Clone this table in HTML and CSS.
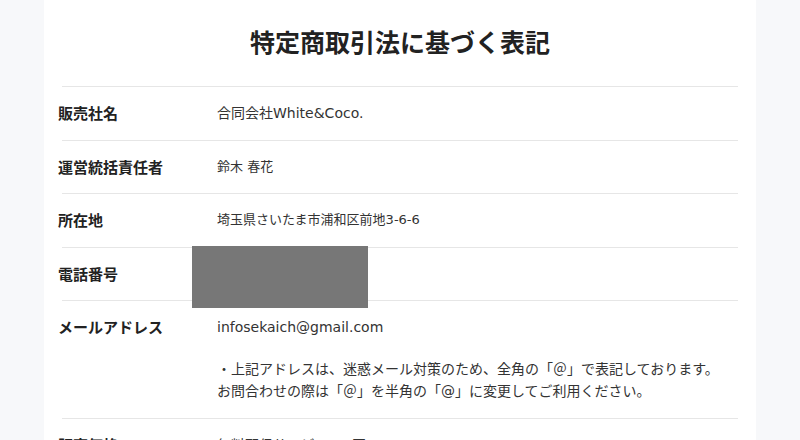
FILE: index.html
```html
<!DOCTYPE html>
<html lang="ja">
<head>
<meta charset="utf-8">
<title>特定商取引法に基づく表記</title>
<link rel="stylesheet" href="styles.css">
</head>
<body>
<main class="card">
  <h1 class="title">特定商取引法に基づく表記</h1>
  <dl class="table">
    <div class="row">
      <dt class="label">販売社名</dt>
      <dd class="value v14">合同会社White&amp;Coco.</dd>
    </div>
    <div class="row">
      <dt class="label">運営統括責任者</dt>
      <dd class="value v13">鈴木 春花</dd>
    </div>
    <div class="row">
      <dt class="label">所在地</dt>
      <dd class="value v13">埼玉県さいたま市浦和区前地3-6-6</dd>
    </div>
    <div class="row phone">
      <dt class="label">電話番号</dt>
      <dd class="value v14"></dd>
      <div class="redact"></div>
    </div>
    <div class="row">
      <dt class="label">メールアドレス</dt>
      <dd class="value v14">
        <div>infosekaich@gmail.com</div>
        <p class="note">・上記アドレスは、迷惑メール対策のため、全角の「＠」で表記しております。<br>お問合わせの際は「＠」を半角の「@」に変更してご利用ください。</p>
      </dd>
    </div>
    <div class="row">
      <dt class="label">販売価格</dt>
      <dd class="value v14">無料配信サービス：0円</dd>
    </div>
  </dl>
</main>
</body>
</html>
```

FILE: styles.css
```css
html, body {
  margin: 0;
  padding: 0;
}
body {
  background: #f7f8fa;
  font-family: "Noto Sans CJK JP", "Noto Sans", sans-serif;
  color: #333;
  height: 440px;
  overflow: hidden;
}
.card {
  width: 676px;
  margin: 0 auto;
  background: #fff;
  padding: 0 18px;
  min-height: 600px;
}
.title {
  margin: 0;
  padding: 23px 0 27px;
  font-size: 25px;
  line-height: 36px;
  font-weight: 700;
  text-align: center;
  color: #222;
}
.table {
  margin: 0;
}
.row {
  display: flex;
  border-top: 1px solid #e6e6e6;
  padding: 16px 0;
  position: relative;
}
.label {
  width: 159px;
  flex: none;
  margin-left: -4px;
  font-size: 15px;
  line-height: 20.5px;
  font-weight: 700;
  color: #222;
}
.value {
  margin: 0;
  line-height: 20.5px;
  color: #333;
  font-family: "DejaVu Sans", "Noto Sans CJK JP", sans-serif;
}
.v14 { font-size: 14px; }
.v13 { font-size: 13px; }
.note {
  margin: 20px 0 0;
  line-height: 22px;
}
.redact {
  position: absolute;
  z-index: 1;
  left: 130px;
  top: -2px;
  width: 176px;
  height: 62px;
  background: #777;
}
```
